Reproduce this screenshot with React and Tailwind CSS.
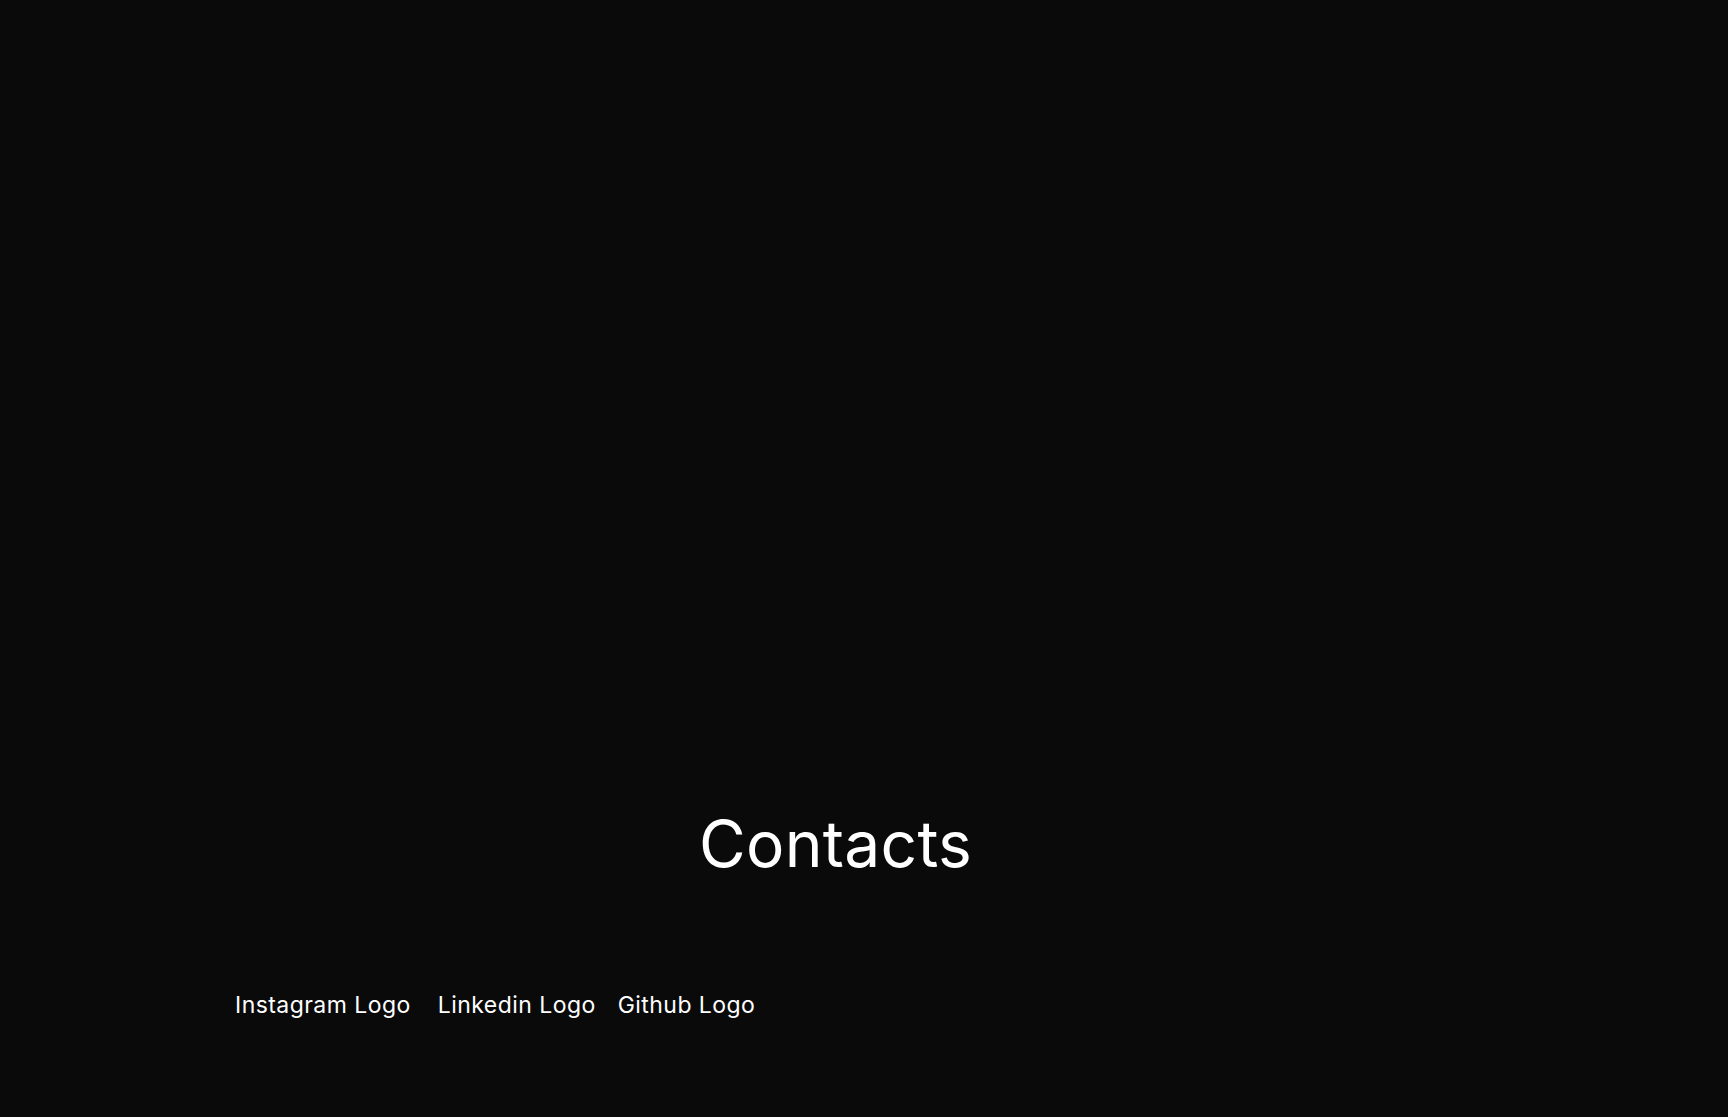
import React from "react";

export default function App() {
  const links = [
    { label: "Instagram Logo", className: "mr-[5px]" },
    { label: "Linkedin Logo", className: "" },
    { label: "Github Logo", className: "" },
  ];

  return (
    <div
      className="min-h-screen w-full bg-[#0a0a0a] text-white"
      style={{ fontFamily: "Inter, 'Noto Sans', sans-serif" }}
    >
      {/* Empty hero area above, contacts section below */}
      <section className="pt-[812px] pl-[235px] pr-[292px] pb-[96px] flex flex-col">
        <h2 className="text-center text-[64px] leading-[64px] font-normal tracking-[0.3px]">
          Contacts
        </h2>

        <div className="mt-[118px] flex items-center gap-[22px]">
          {links.map((link) => (
            <a
              key={link.label}
              href="#"
              className={`text-[23px] leading-[23px] tracking-[0.45px] text-white ${link.className}`}
            >
              {link.label}
            </a>
          ))}
        </div>
      </section>
    </div>
  );
}
